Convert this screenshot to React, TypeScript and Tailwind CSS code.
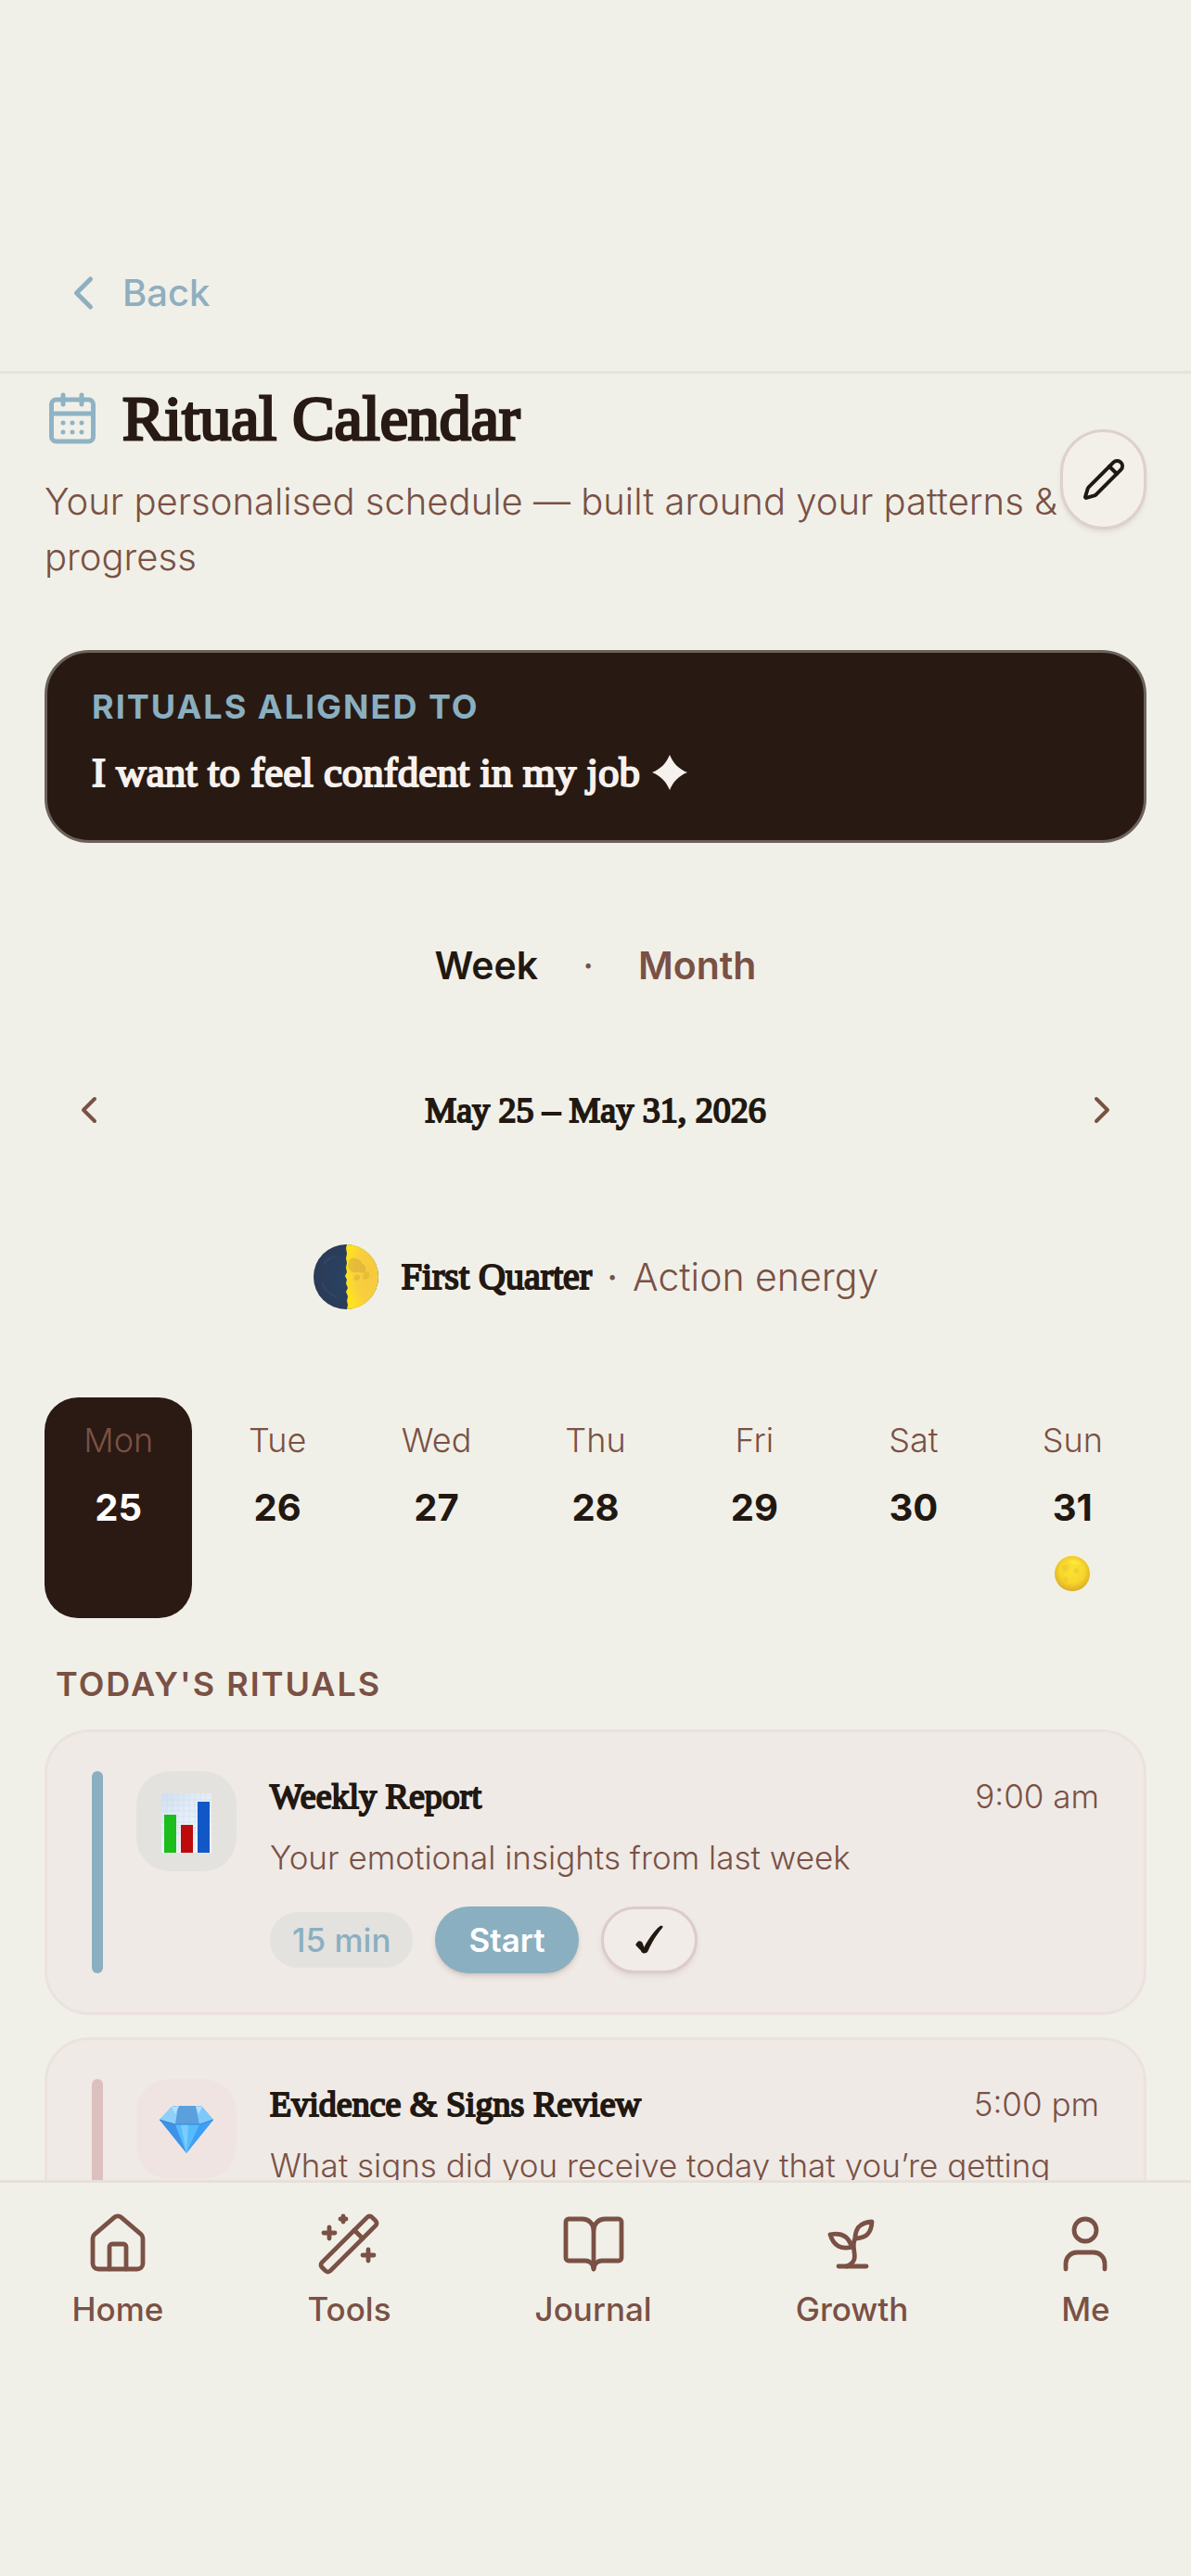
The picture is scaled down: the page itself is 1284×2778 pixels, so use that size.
import { useState } from 'react';
import type { ReactNode } from 'react';
import {
  BookOpen,
  CalendarDays,
  ChevronLeft,
  ChevronRight,
  House,
  Pencil,
  User,
  WandSparkles,
} from 'lucide-react';

const days = [
  { name: 'Mon', date: 25 },
  { name: 'Tue', date: 26 },
  { name: 'Wed', date: 27 },
  { name: 'Thu', date: 28 },
  { name: 'Fri', date: 29 },
  { name: 'Sat', date: 30 },
  { name: 'Sun', date: 31, fullMoon: true },
];

function QuarterMoon() {
  return (
    <svg className="w-[72px] h-[72px]" viewBox="0 0 72 72" aria-hidden="true">
      <defs>
        <radialGradient id="moon-lit" cx="0.75" cy="0.45" r="0.7">
          <stop offset="0" stopColor="#f6c93c" />
          <stop offset="0.6" stopColor="#f8cf3f" />
          <stop offset="1" stopColor="#ffe21f" />
        </radialGradient>
        <radialGradient id="moon-dark" cx="0.6" cy="0.5" r="0.6">
          <stop offset="0" stopColor="#2b4468" />
          <stop offset="1" stopColor="#2a3b56" />
        </radialGradient>
      </defs>
      <circle cx="36" cy="36" r="35" fill="url(#moon-dark)" />
      <path
        d="M37 1a34 35 0 0 1 0 70l1-5-1-4 1-5-2-5 2-4-2-5 1-4-2-4 2-4-1-5 1-5-1-5 1-5-1-6z"
        fill="url(#moon-lit)"
      />
      <path d="M40 17c5-3 11 0 13 4 4 2 6 7 3 10-3 2-5-1-8 0-5 1-9-2-10-7z" fill="#d0a63c" opacity="0.5" />
      <path d="M56 31c3-2 6 0 5 4s-6 5-7 2zM46 34c3-1 6 1 5 4-2 3-6 2-7 0z" fill="#d9ab35" opacity="0.5" />
      <path d="M12 22c4-5 9-8 14-8M10 42c3 8 9 13 16 16" stroke="#3d5578" strokeWidth="2" fill="none" opacity="0.4" />
    </svg>
  );
}

function FullMoon() {
  return (
    <svg className="w-10 h-10" viewBox="0 0 40 40" aria-hidden="true">
      <defs>
        <radialGradient id="moon-full" cx="0.5" cy="0.42" r="0.58">
          <stop offset="0" stopColor="#fbe234" />
          <stop offset="0.6" stopColor="#f8d62c" />
          <stop offset="1" stopColor="#d9ac22" />
        </radialGradient>
      </defs>
      <circle cx="20" cy="20" r="19" fill="url(#moon-full)" />
      <path d="M9 12c3-3 7-1 7 2s-4 5-6 3zM22 15c3-2 6 0 5 3s-5 2-6 0zM11 24c3-1 5 1 4 4s-5 1-5-1z" fill="#e0b02a" opacity="0.3" />
      <path d="M15 7c6-3 12-1 14 3-5 1-10 1-14-3z" fill="#fff04a" opacity="0.6" />
    </svg>
  );
}

function BarChartIcon() {
  return (
    <svg className="mt-1 h-16 w-[54px]" viewBox="0 0 54 64" aria-hidden="true">
      <defs>
        <linearGradient id="sheet" x1="0" y1="0" x2="0.6" y2="1">
          <stop offset="0" stopColor="#cfdfee" />
          <stop offset="0.4" stopColor="#e3edf7" />
          <stop offset="1" stopColor="#f3f7fb" />
        </linearGradient>
      </defs>
      <rect width="54" height="64" fill="url(#sheet)" />
      <path
        d="M6 0v64M12 0v64M18 0v64M24 0v64M30 0v64M36 0v64M42 0v64M48 0v64M0 7h54M0 13h54M0 19h54M0 25h54M0 31h54M0 37h54M0 43h54"
        stroke="#c3d6ea"
        strokeWidth="0.4"
      />
      <rect x="3" y="23" width="13" height="41" fill="#1dbd1d" />
      <rect x="21" y="34" width="13" height="30" fill="#bd0a0a" />
      <rect x="39" y="9" width="13" height="55" fill="#1158c6" />
    </svg>
  );
}

function GemIcon() {
  return (
    <svg className="w-[60px] h-[54px]" viewBox="0 0 60 54" aria-hidden="true">
      <path d="M14 3q2-1 4-1h25q3 0 4 1l12 14-29 36L1 17z" fill="#55b2f8" />
      <path d="M14 3 1 17l17 5 4-19z" fill="#8fd0fb" />
      <path d="M21 2h20l3 20H18z" fill="#5b9fdd" />
      <path d="M47 3 59 17l-15 5-4-19z" fill="#7fc8fb" />
      <path d="M1 17l17 5 12 31z" fill="#3f92e6" />
      <path d="M18 22h26L30 53z" fill="#55bcfc" />
      <path d="M59 17l-15 5-14 31z" fill="#3f9ff4" />
      <path d="M30 53 24 22h8z" fill="#7bccff" />
      <path d="M14 3 22 2l-4 9zM47 3l-7-1 3 9z" fill="#b5e1fe" />
      <path d="M1 17l17 5h26l15-5" stroke="#3687d6" strokeWidth="1" fill="none" />
    </svg>
  );
}

function SproutIcon() {
  return (
    <svg
      className="w-[72px] h-[72px]"
      viewBox="0 0 24 24"
      fill="none"
      stroke="currentColor"
      strokeWidth="1.6"
      strokeLinecap="round"
      strokeLinejoin="round"
      aria-hidden="true"
    >
      <path d="M7 20h10" />
      <path d="M10 20c5.5-2.5.8-6.4 3-10" />
      <path d="M9.5 9.4c1.1.8 1.8 2.2 2.3 3.7-2 .4-3.5.4-4.8-.3-1.2-.6-2.3-1.9-3-4.2 2.8-.5 4.4 0 5.5.8z" />
      <path d="M14.1 6a7 7 0 0 0-1.1 4c1.9-.1 3.3-.6 4.3-1.4 1-1 1.6-2.3 1.7-4.6-2.7.1-4 1-4.9 2z" />
    </svg>
  );
}

const navItems: { label: string; icon: ReactNode }[] = [
  { label: 'Home', icon: <House className="w-[72px] h-[72px]" strokeWidth={1.6} /> },
  { label: 'Tools', icon: <WandSparkles className="w-[72px] h-[72px]" strokeWidth={1.6} /> },
  { label: 'Journal', icon: <BookOpen className="w-[72px] h-[72px]" strokeWidth={1.6} /> },
  { label: 'Growth', icon: <SproutIcon /> },
  { label: 'Me', icon: <User className="w-[72px] h-[72px]" strokeWidth={1.6} /> },
];

type Ritual = {
  title: string;
  time: string;
  description: string;
  duration?: string;
  icon: ReactNode;
  bar: string;
  tile: string;
};

const rituals: Ritual[] = [
  {
    title: 'Weekly Report',
    time: '9:00 am',
    description: 'Your emotional insights from last week',
    duration: '15 min',
    icon: <BarChartIcon />,
    bar: 'bg-[#8aafc1]',
    tile: 'bg-[#e4e2df]',
  },
  {
    title: 'Evidence & Signs Review',
    time: '5:00 pm',
    description: 'What signs did you receive today that you’re getting',
    icon: <GemIcon />,
    bar: 'bg-[#dcbfbf]',
    tile: 'bg-[#f0e4e2]',
  },
];

function RitualCard({ ritual }: { ritual: Ritual }) {
  return (
    <article className="flex shrink-0 rounded-[48px] border-[3px] border-[#ebe2de] bg-[#efeae6] px-12 py-[42px]">
      <div className={`w-3 shrink-0 rounded-full ${ritual.bar}`} />
      <div className={`ml-9 flex h-[108px] w-[108px] shrink-0 items-center justify-center rounded-[36px] ${ritual.tile}`}>
        {ritual.icon}
      </div>
      <div className="ml-9 min-w-0 flex-1">
        <div className="flex items-center justify-between">
          <h3 className="font-['Liberation_Serif',serif] text-[38px] leading-[54px] text-[#211812] [-webkit-text-stroke:2px]">
            {ritual.title}
          </h3>
          <span className="text-[35px] leading-[54px] font-light">{ritual.time}</span>
        </div>
        <p className="mt-3 text-[35px] leading-[54px] font-light">{ritual.description}</p>
        {ritual.duration && (
          <div className="mt-[26px] flex items-center gap-6">
            <span className="rounded-full bg-[#e4e2df] px-6 text-[35px] leading-[60px] font-medium text-[#8aafc1]">
              {ritual.duration}
            </span>
            <button className="h-[72px] rounded-[36px] bg-[#8aafc1] px-9 text-[35px] font-semibold text-white shadow-md shadow-[#7a5145]/20">
              Start
            </button>
            <button
              aria-label="Mark as done"
              className="flex h-[72px] w-[104px] items-center justify-center rounded-[36px] border-[3px] border-[#ddcbcb] bg-[#f1ece8] text-[#211812] shadow-md shadow-[#7a5145]/10"
            >
              <svg className="h-8 w-8" viewBox="0 0 28 28" aria-hidden="true">
                <path d="M2 17c2-3 5-2 6 1l1 3C14 12 19 5 24 1c2-1 4 0 2 2-5 6-9 12-13 21-1 3-6 4-7 0L2 20c-1-1-1-2 0-3z" fill="currentColor" />
              </svg>
            </button>
          </div>
        )}
      </div>
    </article>
  );
}

export default function App() {
  const [selected, setSelected] = useState(25);
  const [view, setView] = useState('Week');

  return (
    <div className="flex h-screen flex-col overflow-hidden bg-[#f1f0e8] font-['Inter',sans-serif] text-[#7a5145]">
      {/* Header */}
      <header className="shrink-0 border-b-[3px] border-[#e7e2db] px-[60px] pt-[280px] pb-[48px]">
        <a href="#" className="inline-flex items-center gap-3 text-[40px] leading-[72px] font-medium text-[#8fafc0]">
          <ChevronLeft className="h-[60px] w-[60px]" />
          Back
        </a>
      </header>

      <main className="flex min-h-0 flex-1 flex-col overflow-hidden px-12">
        {/* Title */}
        <section className="relative shrink-0 pt-3">
          <h1 className="flex items-center gap-6 font-['Liberation_Serif',serif] text-[68px] leading-[72px] text-[#281a14] [-webkit-text-stroke:3px]">
            <CalendarDays className="h-[60px] w-[60px] text-[#8fb3c4]" />
            Ritual Calendar
          </h1>
          <p className="mt-6 text-[40px] leading-[60px] font-light">
            Your personalised schedule — built around your patterns &amp;
            <br />
            progress
          </p>
          <button
            aria-label="Edit schedule"
            className="absolute top-[60px] right-0 flex h-[108px] w-[93px] items-center justify-center rounded-full border-[3px] border-[#ddd0ce] bg-[#f3f0ea] text-[#211812] shadow-md shadow-[#7a5145]/10"
          >
            <Pencil className="h-12 w-12" />
          </button>
        </section>

        {/* Goal */}
        <section className="mt-[70px] shrink-0 rounded-[48px] border-[3px] border-[#6b625b] bg-[#281a12] px-12 pt-[34px] pb-10">
          <h2 className="text-[36px] leading-[48px] font-bold tracking-[2px] text-[#8aafc1]">RITUALS ALIGNED TO</h2>
          <p className="mt-[14px] flex items-center gap-3 font-['Liberation_Serif',serif] text-[45px] leading-[66px] text-[#f7f1ee] [-webkit-text-stroke:2px]">
            I want to feel confdent in my job
            <svg className="h-10 w-10" viewBox="0 0 40 40" aria-hidden="true">
              <path d="M20 1c4 9 9 15 19 19-10 4-15 10-19 19C16 30 11 24 1 20 11 16 16 10 20 1z" fill="currentColor" />
            </svg>
          </p>
        </section>

        {/* View switch */}
        <div className="mt-[96px] flex shrink-0 items-center justify-center gap-12 text-[41px] leading-[72px] font-semibold">
          {['Week', 'Month'].map((name, i) => (
            <div key={name} className="flex items-center gap-12">
              {i > 0 && <span className="font-normal">·</span>}
              <button onClick={() => setView(name)} className={view === name ? 'text-[#211812]' : ''}>
                {name}
              </button>
            </div>
          ))}
        </div>

        <div className="mt-[72px] flex shrink-0 items-center justify-between px-6">
          <button aria-label="Previous week">
            <ChevronLeft className="h-12 w-12" />
          </button>
          <span className="font-['Liberation_Serif',serif] text-[38px] leading-[96px] text-[#211812] [-webkit-text-stroke:2px]">
            May 25 – May 31, 2026
          </span>
          <button aria-label="Next week">
            <ChevronRight className="h-12 w-12" />
          </button>
        </div>

        {/* Moon phase */}
        <div className="mt-[84px] flex shrink-0 items-center justify-center text-[41px] leading-[96px] font-light">
          <QuarterMoon />
          <strong className="ml-6 font-['Liberation_Serif',serif] text-[40px] font-normal text-[#211812] [-webkit-text-stroke:2px]">
            First Quarter
          </strong>
          <span className="mx-4 font-normal">·</span>
          <span>Action energy</span>
        </div>

        {/* Days */}
        <div className="mt-[82px] grid shrink-0 grid-cols-7 gap-3">
          {days.map((day) => (
            <button
              key={day.date}
              onClick={() => setSelected(day.date)}
              className={`flex h-[238px] flex-col items-center rounded-[36px] pt-[22px] ${
                selected === day.date ? 'bg-[#2a1a13] text-white' : 'text-[#211812]'
              }`}
            >
              <span className="text-[36px] leading-[48px] font-light text-[#7a5145]">{day.name}</span>
              <span className="mt-[22px] text-[40px] leading-[54px] font-bold">{day.date}</span>
              {day.fullMoon && (
                <span className="mt-6">
                  <FullMoon />
                </span>
              )}
            </button>
          ))}
        </div>

        <h2 className="mt-11 shrink-0 px-3 text-[36px] leading-[54px] font-semibold tracking-[2px]">
          TODAY'S RITUALS
        </h2>
        <div className="mt-[22px] flex flex-col gap-6">
          {rituals.map((ritual) => (
            <RitualCard key={ritual.title} ritual={ritual} />
          ))}
        </div>
      </main>

      <nav className="flex shrink-0 justify-around border-t-[3px] border-[#e7e0da] bg-[#f1f0e8] pt-[30px] pb-[262px]">
        {navItems.map((item) => (
          <a
            key={item.label}
            href="#"
            className="flex flex-col items-center gap-2 text-[35px] leading-[52px] font-medium"
          >
            {item.icon}
            {item.label}
          </a>
        ))}
      </nav>
    </div>
  );
}
